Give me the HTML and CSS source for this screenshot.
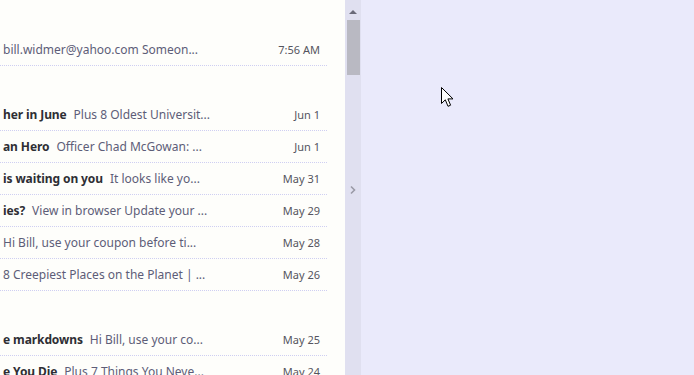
FILE: index.html
```html
<!DOCTYPE html>
<html lang="en">
<head>
    <meta charset="UTF-8">
    <meta name="viewport" content="width=device-width, initial-scale=1.0">
    <title>Inbox</title>
    <link rel="stylesheet" href="styles.css">
</head>
<body>
    <div class="app">
        <div class="message-list">
            <div class="list-head"></div>

            <div class="row">
                <div class="summary"><span class="preview">bill.widmer@yahoo.com Someon...</span></div>
                <div class="date">7:56 AM</div>
            </div>

            <div class="group-head"></div>

            <div class="row">
                <div class="summary"><span class="sender">her in June</span><span class="preview">Plus 8 Oldest Universit...</span></div>
                <div class="date">Jun 1</div>
            </div>
            <div class="row">
                <div class="summary"><span class="sender">an Hero</span><span class="preview">Officer Chad McGowan: ...</span></div>
                <div class="date">Jun 1</div>
            </div>
            <div class="row">
                <div class="summary"><span class="sender">is waiting on you</span><span class="preview">It looks like yo...</span></div>
                <div class="date">May 31</div>
            </div>
            <div class="row">
                <div class="summary"><span class="sender">ies?</span><span class="preview">View in browser Update your ...</span></div>
                <div class="date">May 29</div>
            </div>
            <div class="row">
                <div class="summary"><span class="preview">Hi Bill, use your coupon before ti...</span></div>
                <div class="date">May 28</div>
            </div>
            <div class="row">
                <div class="summary"><span class="preview">8 Creepiest Places on the Planet | ...</span></div>
                <div class="date">May 26</div>
            </div>

            <div class="group-head"></div>

            <div class="row">
                <div class="summary"><span class="sender">e markdowns</span><span class="preview">Hi Bill, use your co...</span></div>
                <div class="date">May 25</div>
            </div>
            <div class="row">
                <div class="summary"><span class="sender">e You Die</span><span class="preview">Plus 7 Things You Neve...</span></div>
                <div class="date">May 24</div>
            </div>
        </div>

        <div class="scrollbar">
            <div class="scroll-up"></div>
            <div class="scroll-thumb"></div>
            <div class="collapse-tab">
                <svg width="8" height="10" viewBox="0 0 8 10">
                    <path d="M2 1.5 L5.5 5 L2 8.5" fill="none" stroke="#9a9aa6" stroke-width="1.6"/>
                </svg>
            </div>
        </div>

        <div class="reading-pane"></div>

        <svg class="cursor" width="13" height="21" viewBox="0 0 13 21">
            <path d="M0.5 0.5 L0.5 16.5 L4.3 12.8 L7 19.3 L9.6 18.2 L6.9 11.9 L12 11.9 Z" fill="#fff" stroke="#000" stroke-width="1" stroke-linejoin="round"/>
        </svg>
    </div>
</body>
</html>
```

FILE: styles.css
```css
* {
    margin: 0;
    padding: 0;
    box-sizing: border-box;
}

body {
    font-family: "Noto Sans", "Open Sans", sans-serif;
    font-size: 12px;
    background: #eaeafb;
    height: 100vh;
    overflow: hidden;
}

.app {
    display: flex;
    height: 100vh;
    position: relative;
}

.message-list {
    width: 345px;
    background: #fefefb;
    padding-right: 18px;
    overflow: hidden;
}

.list-head {
    height: 34px;
}

.group-head {
    height: 33px;
}

.row {
    display: flex;
    align-items: center;
    height: 32px;
    border-bottom: 1px dotted #cfcff2;
    padding: 0 7px 0 3px;
    white-space: nowrap;
}

.summary {
    flex: 1;
    overflow: hidden;
}

.sender {
    font-weight: 700;
    color: #2e2e34;
    margin-right: 7px;
    letter-spacing: -0.1px;
}

.preview {
    color: #5d5d78;
}

.date {
    color: #55555e;
    font-size: 11px;
}

.scrollbar {
    width: 16px;
    background: #e0e0f0;
    display: flex;
    flex-direction: column;
    align-items: center;
    position: relative;
}

.scroll-up {
    margin-top: 10px;
    width: 0;
    height: 0;
    border-left: 4px solid transparent;
    border-right: 4px solid transparent;
    border-bottom: 4px solid #6a6a78;
}

.scroll-thumb {
    margin-top: 6px;
    width: 13px;
    height: 55px;
    background: #b9b9c2;
}

.collapse-tab {
    position: absolute;
    top: 180px;
    left: -2px;
    width: 16px;
    height: 20px;
    border-radius: 0 4px 4px 0;
    display: flex;
    align-items: center;
    justify-content: flex-end;
    padding-right: 2px;
}

.reading-pane {
    flex: 1;
    background: #eaeafb;
}

.cursor {
    position: absolute;
    left: 441px;
    top: 87px;
}
```
